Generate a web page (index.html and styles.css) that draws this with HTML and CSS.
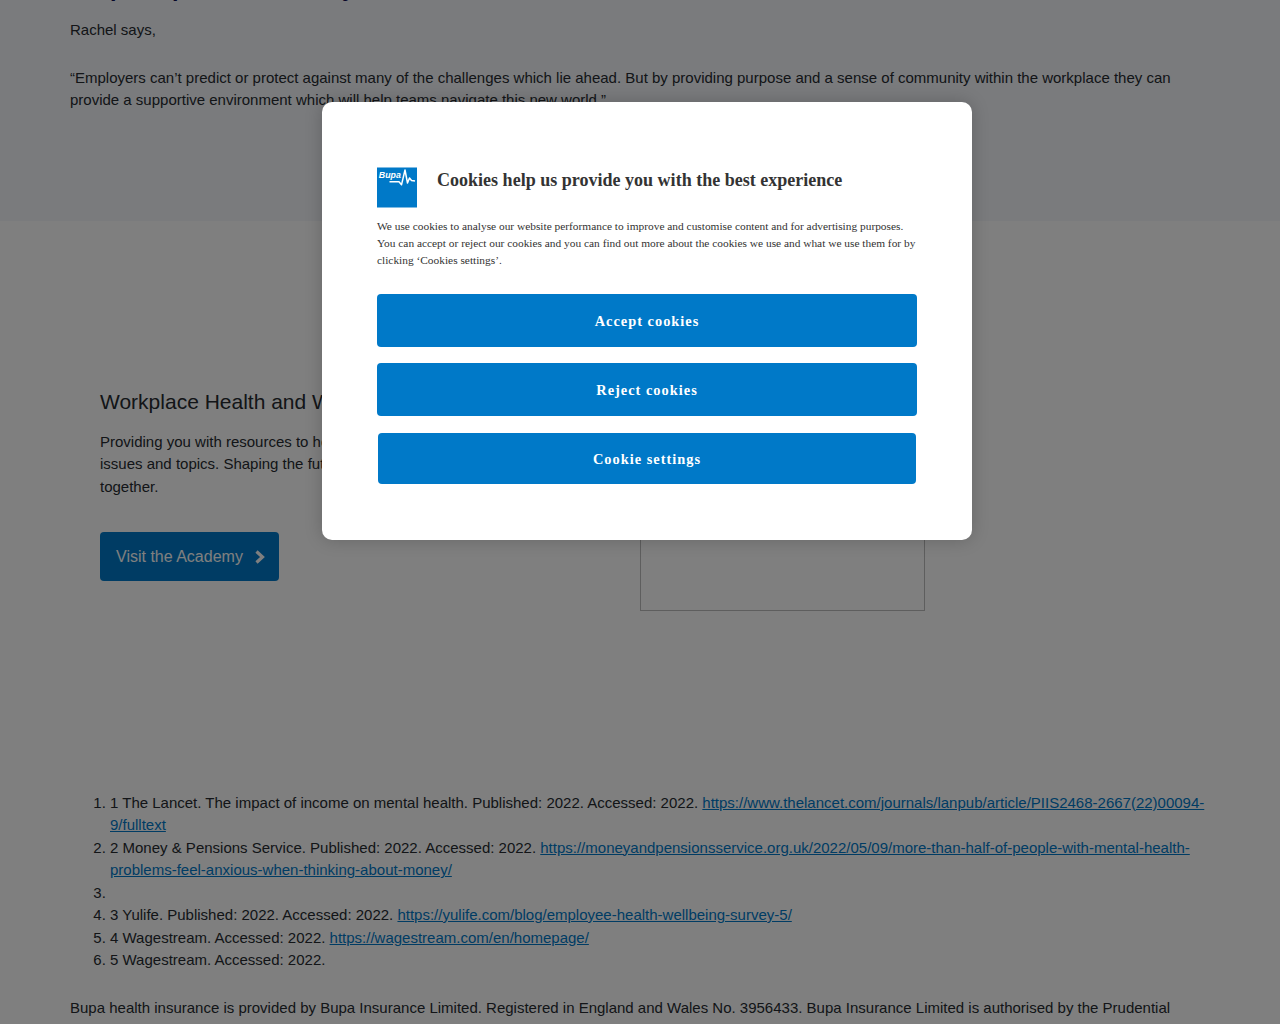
FILE: index.html
```html
<!DOCTYPE html>
<html lang="en">
<head>
<meta charset="utf-8">
<title>Bupa workplace health</title>
<link rel="stylesheet" href="styles.css">
</head>
<body>
<main class="page">
  <section class="quote">
    <h2 class="quote-title">Purpose promotes clarity</h2>
    <p>Rachel says,</p>
    <p>“Employers can’t predict or protect against many of the challenges which lie ahead. But by providing purpose and a sense of community within the workplace they can provide a supportive environment which will help teams navigate this new world.”</p>
  </section>
  <section class="academy">
    <div class="academy-copy">
      <h3>Workplace Health and Wellbeing Academy</h3>
      <p>Providing you with resources to help you manage key workplace health issues and topics. Shaping the future of workplace health and wellbeing together.</p>
      <a class="academy-button"><span>Visit the Academy</span><svg width="10" height="14" viewBox="0 0 10 14"><path d="M1.500 1.500 7.500 7l-6 5.500" fill="none" stroke="#fff" stroke-width="3.200"/></svg></a>
    </div>
    <div class="academy-image"></div>
  </section>
  <footer class="references">
    <ol>
      <li>1 The Lancet. The impact of income on mental health. Published: 2022. Accessed: 2022. <a>https://www.thelancet.com/journals/lanpub/article/PIIS2468-2667(22)00094-9/fulltext</a></li>
      <li>2 Money &amp; Pensions Service. Published: 2022. Accessed: 2022. <a>https://moneyandpensionsservice.org.uk/2022/05/09/more-than-half-of-people-with-mental-health-problems-feel-anxious-when-thinking-about-money/</a></li>
      <li></li>
      <li>3 Yulife. Published: 2022. Accessed: 2022. <a>https://yulife.com/blog/employee-health-wellbeing-survey-5/</a></li>
      <li>4 Wagestream. Accessed: 2022. <a>https://wagestream.com/en/homepage/</a></li>
      <li>5 Wagestream. Accessed: 2022.</li>
    </ol>
    <p>Bupa health insurance is provided by Bupa Insurance Limited. Registered in England and Wales No. 3956433. Bupa Insurance Limited is authorised by the Prudential</p>
  </footer>
</main>
<div class="overlay">
  <div class="dialog" role="dialog">
    <div class="dialog-head">
      <svg class="logo" width="40" height="41" viewBox="0 0 40 41"><rect y=".5" width="40" height="40" fill="#0079c8"/><text x="1.800" y="11" class="logo-text" textLength="22" lengthAdjust="spacingAndGlyphs">Bupa</text><path d="M12.500 14.800H22l2.500 3L28 3l2.500 13 2-5 2 2.500 3.500.500" fill="none" stroke="#fff" stroke-width="1.500" stroke-linejoin="round"/></svg>
      <h2>Cookies help us provide you with the best experience</h2>
    </div>
    <p class="dialog-text">We use cookies to analyse our website performance to improve and customise content and for advertising purposes. You can accept or reject our cookies and you can find out more about the cookies we use and what we use them for by clicking ‘Cookies settings’.</p>
    <div class="actions">
      <button>Accept cookies</button>
      <button>Reject cookies</button>
      <button class="settings">Cookie settings</button>
    </div>
  </div>
</div>
</body>
</html>
```
FILE: styles.css
```css
* { box-sizing: border-box; }
body {
  margin: 0;
  height: 1024px;
  overflow: hidden;
  background: #fff;
  color: #262b30;
  font: 15px/22.5px "Liberation Sans", Arial, sans-serif;
}
p, h2, h3, ol { margin: 0; }
.page { height: 1024px; overflow: hidden; }
.quote {
  display: flow-root;
  height: 221px;
  padding: 0 70px;
  background: #f4f6fa;
}
.quote-title {
  height: 30px;
  margin-top: -27px;
  padding-left: 1px;
  font-size: 23.4px;
  line-height: 30px;
  word-spacing: 1px;
  color: #0d0d52;
}
.quote p { margin: 15.5px 0 25.5px; }
.quote p + p { margin-top: 0; }
.academy {
  display: grid;
  grid-template-columns: 540px 285px;
  height: 559px;
  padding: 167px 100px 0;
}
.academy h3 {
  font-size: 21px;
  font-weight: 400;
  line-height: 28px;
  margin-bottom: 14.5px;
}
.academy-copy p { width: 500px; margin-bottom: 34px; }
.academy-button {
  display: inline-flex;
  align-items: center;
  gap: 12px;
  width: 178.5px;
  height: 48.5px;
  padding: 1.5px 0 0 16px;
  border-radius: 4px;
  background: #0079c8;
  color: #fff;
  font-size: 16px;
}
.academy-image { height: 223px; border: 1px solid #bcbcbc; }
.references { padding: 11.5px 70px 0; }
.references ol { padding-left: 40px; margin-bottom: 25.5px; }
.references a {
  color: #0079c8;
  text-decoration: underline;
}
.overlay {
  position: absolute;
  inset: 0;
  padding: 102px 0 0 322px;
  background: rgba(0, 0, 0, .5);
}
.dialog {
  width: 650px;
  height: 438px;
  padding: 65px 55px 0;
  border-radius: 10px;
  background: #fff;
  box-shadow: 0 0 18px rgba(0, 0, 0, .2);
  color: #333;
  font-family: "Liberation Serif", "Times New Roman", serif;
}
.dialog-head { display: flex; gap: 20px; height: 51px; }
.dialog h2 { font-size: 18.05px; line-height: 26px; white-space: nowrap; }
.logo-text { font: italic bold 8.5px "Liberation Sans", sans-serif; fill: #fff; }
.dialog-text { font-size: 11.38px; line-height: 17px; margin-bottom: 25px; }
.actions { display: flex; flex-direction: column; gap: 16px; }
.actions button {
  height: 53px;
  padding: 2px 0 0;
  border: 0;
  border-radius: 4px;
  background: #0079c8;
  color: #fff;
  font: bold 14.4px "Liberation Serif", serif;
  letter-spacing: 1px;
}
.actions .settings { height: 51px; margin: 1px; }
```
